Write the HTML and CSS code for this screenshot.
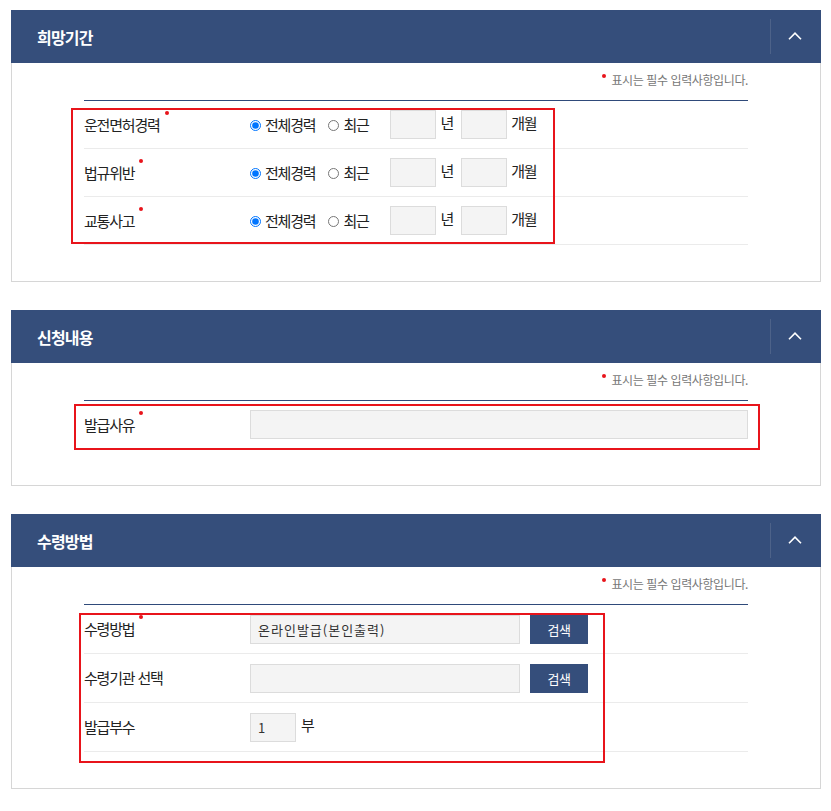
FILE: index.html
```html
<!DOCTYPE html>
<html lang="ko">
<head>
<meta charset="utf-8">
<title>신청</title>
<link rel="stylesheet" href="styles.css">
</head>
<body>

<section class="panel">
  <div class="panel-head">
    <h2 class="panel-title">희망기간</h2>
    <div class="toggle"><svg class="chev" viewBox="0 0 14 8" width="14" height="8"><polyline points="1,7.2 7,1.2 13,7.2" fill="none" stroke="#fff" stroke-width="1.6"/></svg></div>
  </div>
  <div class="panel-body">
    <p class="note"><span class="req-note"></span>표시는 필수 입력사항입니다.</p>
    <div class="form">
      <div class="row">
        <div class="label">운전면허경력<span class="req"></span></div>
        <div class="field">
          <label class="radio"><input type="radio" name="r1" checked>전체경력</label>
          <label class="radio radio-2"><input type="radio" name="r1">최근</label>
          <input class="box box-sm box-first" type="text"><span class="unit">년</span>
          <input class="box box-sm box-second" type="text"><span class="unit unit-m">개월</span>
        </div>
      </div>
      <div class="row">
        <div class="label">법규위반<span class="req"></span></div>
        <div class="field">
          <label class="radio"><input type="radio" name="r2" checked>전체경력</label>
          <label class="radio radio-2"><input type="radio" name="r2">최근</label>
          <input class="box box-sm box-first" type="text"><span class="unit">년</span>
          <input class="box box-sm box-second" type="text"><span class="unit unit-m">개월</span>
        </div>
      </div>
      <div class="row">
        <div class="label">교통사고<span class="req"></span></div>
        <div class="field">
          <label class="radio"><input type="radio" name="r3" checked>전체경력</label>
          <label class="radio radio-2"><input type="radio" name="r3">최근</label>
          <input class="box box-sm box-first" type="text"><span class="unit">년</span>
          <input class="box box-sm box-second" type="text"><span class="unit unit-m">개월</span>
        </div>
      </div>
      <div class="mark mark-1"></div>
    </div>
  </div>
</section>

<section class="panel">
  <div class="panel-head">
    <h2 class="panel-title">신청내용</h2>
    <div class="toggle"><svg class="chev" viewBox="0 0 14 8" width="14" height="8"><polyline points="1,7.2 7,1.2 13,7.2" fill="none" stroke="#fff" stroke-width="1.6"/></svg></div>
  </div>
  <div class="panel-body">
    <p class="note"><span class="req-note"></span>표시는 필수 입력사항입니다.</p>
    <div class="form">
      <div class="row">
        <div class="label">발급사유<span class="req"></span></div>
        <div class="field">
          <input class="box box-full" type="text">
        </div>
      </div>
      <div class="mark mark-2"></div>
    </div>
  </div>
</section>

<section class="panel">
  <div class="panel-head">
    <h2 class="panel-title">수령방법</h2>
    <div class="toggle"><svg class="chev" viewBox="0 0 14 8" width="14" height="8"><polyline points="1,7.2 7,1.2 13,7.2" fill="none" stroke="#fff" stroke-width="1.6"/></svg></div>
  </div>
  <div class="panel-body">
    <p class="note"><span class="req-note"></span>표시는 필수 입력사항입니다.</p>
    <div class="form">
      <div class="row row-tall">
        <div class="label">수령방법<span class="req"></span></div>
        <div class="field">
          <input class="box box-md" type="text" value="온라인발급(본인출력)">
          <button class="btn" type="button">검색</button>
        </div>
      </div>
      <div class="row row-tall">
        <div class="label">수령기관 선택</div>
        <div class="field">
          <input class="box box-md" type="text">
          <button class="btn" type="button">검색</button>
        </div>
      </div>
      <div class="row row-tall">
        <div class="label">발급부수</div>
        <div class="field">
          <input class="box box-sm" type="text" value="1"><span class="unit">부</span>
        </div>
      </div>
      <div class="mark mark-3"></div>
    </div>
  </div>
</section>

</body>
</html>
```

FILE: styles.css
```css
html, body {
  background: #fff;
}
body {
  margin: 10px 10px 20px 11px;
  font-family: "Noto Sans CJK KR", "Noto Sans", sans-serif;
  color: #222;
}
.panel {
  margin-bottom: 28px;
}
.panel-head {
  display: flex;
  align-items: center;
  height: 53px;
  background: #354e7b;
  padding-left: 26px;
}
.panel-title {
  flex: 1;
  margin: 0;
  font-size: 16px;
  font-weight: 700;
  letter-spacing: -0.8px;
  line-height: 20px;
  color: #fff;
}
.toggle {
  width: 50px;
  height: 35px;
  border-left: 1px solid #4d6289;
  display: flex;
  align-items: center;
  justify-content: center;
}
.chev {
  display: block;
  margin-top: -2px;
  margin-left: -2px;
}
.panel-body {
  border: 1px solid #d6d6d6;
  border-top: none;
  padding: 0 72px 36px;
}
.note {
  margin: 0;
  padding: 8px 0 11px;
  line-height: 18px;
  font-size: 12px;
  letter-spacing: -0.4px;
  color: #777;
  text-align: right;
}
.req-note {
  display: inline-block;
  width: 4px;
  height: 4px;
  border-radius: 50%;
  background: #e8141b;
  vertical-align: top;
  position: relative;
  top: 3px;
  margin-right: 5px;
}
.form {
  position: relative;
  border-top: 1px solid #2f4a7a;
}
.row {
  display: flex;
  align-items: center;
  height: 47px;
  border-bottom: 1px solid #ebebeb;
}
.row-tall {
  height: 48px;
}
.label {
  width: 166px;
  flex: none;
  font-size: 15px;
  letter-spacing: -1.2px;
  line-height: 20px;
  color: #222;
}
.req {
  display: inline-block;
  width: 4px;
  height: 4px;
  border-radius: 50%;
  background: #e8141b;
  vertical-align: top;
  position: relative;
  top: -4px;
  margin-left: 5px;
}
.field {
  flex: 1;
  display: flex;
  align-items: center;
  font-size: 15px;
  letter-spacing: -1.2px;
  line-height: 20px;
  color: #222;
}
.radio {
  display: flex;
  align-items: center;
}
.radio input {
  width: 11px;
  height: 11px;
  margin: 1px 4px 0 0;
}
.radio-2 {
  margin-left: 13px;
}
.box {
  box-sizing: border-box;
  height: 29px;
  border: 1px solid #dcdcdc;
  background: #f4f4f4;
  padding: 0 7px;
  font-family: "Noto Sans CJK KR", "Noto Sans", sans-serif;
  font-size: 13px;
  letter-spacing: 1px;
  color: #333;
  outline: none;
  border-radius: 0;
}
.box-sm {
  width: 46px;
}
.box-first {
  margin-left: 21px;
}
.box-second {
  margin-left: 8px;
}
.box-md {
  width: 270px;
}
.box-full {
  flex: 1;
}
.unit {
  margin-left: 5px;
  position: relative;
  top: -2px;
}
.unit-m {
  margin-left: 4px;
}
.btn {
  box-sizing: border-box;
  width: 58px;
  height: 29px;
  margin-left: 10px;
  border: none;
  background: #354e7b;
  color: #fff;
  font-family: "Noto Sans CJK KR", "Noto Sans", sans-serif;
  font-size: 13px;
  letter-spacing: -0.5px;
  padding: 0;
}
.mark {
  position: absolute;
  box-sizing: border-box;
  border: 2px solid #e8141b;
  pointer-events: none;
}
.mark-1 {
  left: -13px;
  top: 7px;
  width: 484px;
  height: 136px;
}
.mark-2 {
  left: -10px;
  top: 3px;
  width: 686px;
  height: 46px;
}
.mark-3 {
  left: -5px;
  top: 8px;
  width: 526px;
  height: 150px;
}
```
